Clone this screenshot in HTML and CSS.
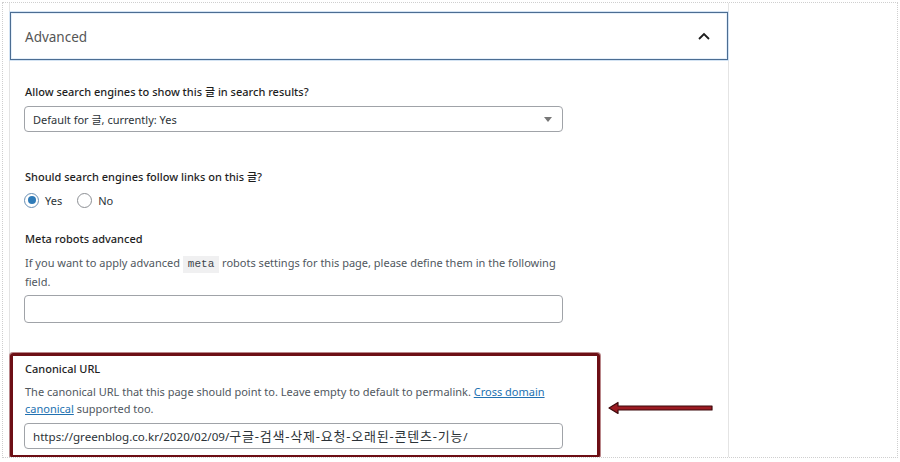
FILE: index.html
```html
<!DOCTYPE html>
<html lang="en">
  <head>
    <meta charset="UTF-8" />
    <meta name="viewport" content="width=device-width, initial-scale=1.0" />
    <title>Advanced settings</title>
    <link rel="stylesheet" href="styles.css">
  </head>
  <body>
    <div class="frame">
      <div class="panel">
        <div class="panel-header">
          <span class="panel-title">Advanced</span>
          <svg class="chevron" width="14" height="10" viewBox="0 0 14 10">
            <path d="M2 8 L7 3 L12 8" fill="none" stroke="#1e1e1e" stroke-width="1.8" />
          </svg>
        </div>

        <div class="field field-index">
          <label class="field-label">Allow search engines to show this 글 in search results?</label>
          <div class="select">
            <span>Default for 글, currently: Yes</span>
            <span class="select-arrow"></span>
          </div>
        </div>

        <div class="field field-follow">
          <label class="field-label">Should search engines follow links on this 글?</label>
          <div class="radios">
            <span class="radio checked"></span><span class="radio-text">Yes</span>
            <span class="radio"></span><span class="radio-text">No</span>
          </div>
        </div>

        <div class="field field-meta">
          <label class="field-label">Meta robots advanced</label>
          <p class="field-desc">If you want to apply advanced <code>meta</code> robots settings for this page, please define them in the following field.</p>
          <div class="text-input"></div>
        </div>

        <div class="highlight-row">
          <div class="highlight">
            <label class="field-label">Canonical URL</label>
            <p class="field-desc canon-desc">The canonical URL that this page should point to. Leave empty to default to permalink. <a href="#">Cross domain canonical</a> supported too.</p>
            <div class="text-input url-input">https://greenblog.co.kr/2020/02/09/<span class="ko">구글-검색-삭제-요청-오래된-콘텐츠-기능</span>/</div>
          </div>
          <svg class="arrow" width="108" height="14" viewBox="0 0 108 14">
            <path d="M1 7 L10 1.5 L10 5 L104 5 L104 9 L10 9 L10 12.5 Z" fill="#9b1b22" stroke="#3d0a0d" stroke-width="1.2" stroke-linejoin="round" />
          </svg>
        </div>
      </div>
    </div>
  </body>
</html>
```

FILE: styles.css
```css
html,
body {
  margin: 0;
  background-color: #fff;
  font-family: "Noto Sans", "Noto Sans CJK KR", sans-serif;
  font-size: 11px;
  color: #1e1e1e;
}
.frame {
  margin: 2px;
  height: 456px;
  border: 1px dotted #cfcfcf;
  box-sizing: border-box;
  overflow: hidden;
}
.panel {
  margin-left: 6px;
  width: 720px;
  height: 100%;
  padding-top: 9px;
  border-left: 1px solid #e4e4e4;
  border-right: 1px solid #e4e4e4;
  box-sizing: border-box;
}
.panel-header {
  height: 48px;
  display: flex;
  align-items: center;
  justify-content: space-between;
  padding: 0 16px 0 14px;
  border: 1px solid #4c6d92;
  box-shadow: 0 0 0 1px #d3e3f3, inset 0 0 0 1px #e6f0fa;
  box-sizing: border-box;
}
.panel-title {
  font-size: 13.5px;
  color: #555;
  padding-top: 1px;
}
.chevron {
  display: block;
}
.field {
  padding: 0 14px;
}
.field-label {
  display: block;
  line-height: 18px;
  font-weight: 500;
  padding-left: 1px;
}
.field-index {
  margin-top: 23px;
}
.field-follow {
  margin-top: 36px;
}
.field-meta {
  margin-top: 21px;
}
.select {
  margin-top: 5px;
  width: 539px;
  height: 26px;
  display: flex;
  align-items: center;
  justify-content: space-between;
  padding: 0 10px 0 8px;
  border: 1px solid #a0a3a8;
  border-radius: 4px;
  box-sizing: border-box;
  color: #2c3338;
}
.select-arrow {
  width: 0;
  height: 0;
  border-left: 4px solid transparent;
  border-right: 4px solid transparent;
  border-top: 5px solid #777;
}
.radios {
  margin-top: 5px;
  height: 18px;
  display: flex;
  align-items: center;
}
.radio {
  width: 15px;
  height: 15px;
  border: 1px solid #8c8f94;
  border-radius: 50%;
  box-sizing: border-box;
  position: relative;
}
.radio.checked {
  border-color: #6a8fb3;
}
.radio.checked::after {
  content: "";
  position: absolute;
  left: 2.5px;
  top: 2.5px;
  width: 8px;
  height: 8px;
  border-radius: 50%;
  background-color: #2f7bb8;
}
.radio-text {
  margin: 0 15px 0 6px;
  color: #2c3338;
}
.field-desc {
  margin: 6px 0 0;
  padding-left: 1px;
  line-height: 18px;
  color: #50575e;
  width: 545px;
}
code {
  display: inline-block;
  font-family: "Liberation Mono", monospace;
  font-size: 11px;
  line-height: 17px;
  background-color: #f0f0f1;
  padding: 0 5px;
  color: #3c434a;
}
.text-input {
  margin-top: 4px;
  width: 539px;
  height: 28px;
  border: 1px solid #a0a3a8;
  border-radius: 4px;
  box-sizing: border-box;
}
.highlight-row {
  margin-top: 30px;
  display: flex;
  align-items: center;
}
.highlight {
  width: 590px;
  height: 105px;
  padding: 4px 11px 0;
  border: 3px solid #6d0f15;
  border-radius: 3px;
  box-shadow: 0 0 0 1px #b9878a;
  box-sizing: border-box;
}
.canon-desc {
  margin-top: 5px;
  line-height: 17px;
}
.canon-desc a {
  color: #2271b1;
}
.url-input {
  margin-top: 6px;
  height: 26px;
  padding: 0 8px;
  line-height: 24px;
  color: #2c3338;
  font-size: 11.6px;
}
.ko {
  font-size: 13px;
  letter-spacing: 0.8px;
}
.arrow {
  display: block;
  margin: 4px 0 0 8px;
}
```
